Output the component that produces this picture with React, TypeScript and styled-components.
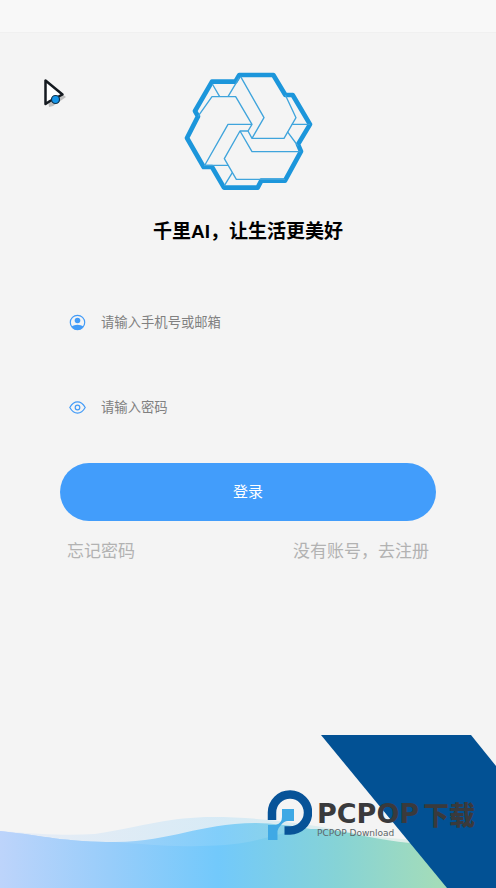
import React from "react";
import styled, { createGlobalStyle } from "styled-components";

const GlobalStyle = createGlobalStyle`
  * { box-sizing: border-box; }
  body {
    margin: 0;
    background: #f4f4f4;
    font-family: "Liberation Sans", "Noto Sans CJK SC", sans-serif;
  }
`;

const Page = styled.div`
  position: relative;
  min-height: 100vh;
  display: flex;
  flex-direction: column;
  overflow: hidden;
`;

const TopBar = styled.header`
  height: 33px;
  background: #f8f8f8;
  border-bottom: 1px solid #f0f0f0;
`;

const Main = styled.main`
  flex: 1;
  display: flex;
  flex-direction: column;
  align-items: center;
  padding: 29px 60px 0;
`;

const Logo = styled.svg`
  width: 144px;
  height: 136px;
`;

const Title = styled.h1`
  margin: 20px 0 0;
  font-size: 19px;
  line-height: 28px;
  font-weight: 700;
  color: #000;
`;

const Form = styled.form`
  width: 100%;
  margin-top: 46px;
`;

const Field = styled.label`
  display: flex;
  align-items: center;
  gap: 15px;
  height: 60px;
  margin-bottom: 25px;
  padding: 0 9px;
`;

const FieldIcon = styled.svg`
  flex: none;
  width: 17px;
  height: 17px;
  color: #429bf7;
`;

const Input = styled.input`
  flex: 1;
  min-width: 0;
  height: 24px;
  padding: 0 0 2px;
  border: 0;
  outline: 0;
  background: transparent;
  font-family: "Noto Sans CJK SC", sans-serif;
  color: #333;

  &::placeholder { color: #808080; }
`;

const SubmitButton = styled.button`
  display: block;
  width: 100%;
  height: 58px;
  margin-top: 26px;
  padding: 0 0 4px;
  border: 0;
  border-radius: 29px;
  background: #429dfb;
  color: #fff;
  font-family: "Noto Sans CJK SC", sans-serif;
  font-size: 15px;
  cursor: pointer;
`;

const Links = styled.nav`
  width: 100%;
  display: flex;
  justify-content: space-between;
  padding: 15px 7px 0;
`;

const TextLink = styled.a`
  font-family: "Noto Sans CJK SC", sans-serif;
  font-size: 17px;
  line-height: 28px;
  color: #b2b2b2;
  text-decoration: none;
`;

const Waves = styled.svg`
  position: absolute;
  left: 0;
  bottom: 0;
  width: 100%;
  height: 72px;
`;

const Banner = styled.svg`
  position: absolute;
  right: 0;
  bottom: 0;
  width: 176px;
  height: 153px;
`;

const Watermark = styled.div`
  position: absolute;
  right: 21px;
  bottom: 47px;
  display: flex;
  align-items: flex-start;
  gap: 5px;
`;

const WatermarkLogo = styled.svg`
  width: 45px;
  height: 51px;
`;

const WatermarkText = styled.div`
  display: flex;
  flex-direction: column;
  width: 158px;
  padding-top: 11px;
  color: #3a3a3c;
`;

const BrandName = styled.div`
  display: flex;
  justify-content: space-between;
  font-family: "DejaVu Sans", sans-serif;
  font-size: 27px;
  font-weight: 700;
  line-height: 26px;
`;

const BrandSuffix = styled.span`
  font-family: "Noto Sans CJK SC", sans-serif;
  font-size: 26px;
  font-weight: 900;
  line-height: 26px;
`;

const BrandCaption = styled.div`
  margin-top: 1px;
  font-family: "DejaVu Sans", sans-serif;
  font-size: 9px;
  line-height: 10px;
  color: #5d6668;
`;

const Cursor = styled.svg`
  position: absolute;
  left: 40px;
  top: 76px;
  width: 28px;
  height: 32px;
`;

function KnotLogo() {
  return (
    <Logo viewBox="0 0 432 408" role="img" aria-label="千里AI" fill="none" stroke="#1c96db" strokeLinejoin="round">
      <path
        strokeWidth="14"
        d="M190 39H292L328 99H350L402 187L366 247L375 268L327 356H256L245 377H144L108 315H83L33 228L66 163L57 147L108 59H178Z"
      />
      <g stroke="#3fa4dc" strokeWidth="4">
        <path d="M194 44L264 167L228 229L216 207" />
        <path d="M328 99L360 167L324 229H228" />
        <path d="M190 47L156 104M109 66L131 104" />
        <path d="M66 163L108 104H179L228 187L216 207H192L145 290L181 352H327" />
        <path d="M228 187H156L85 312M85 310H156" />
        <path d="M192 207L228 269H373" />
        <path d="M347 187H402M334 209L366 252M169 332L145 371" />
      </g>
    </Logo>
  );
}

function UserIcon() {
  return (
    <FieldIcon viewBox="0 0 17 17" aria-hidden="true">
      <circle cx="8.5" cy="8.5" r="7.2" fill="none" stroke="currentColor" strokeWidth="1.2" />
      <circle cx="8.5" cy="6.5" r="2.8" fill="currentColor" />
      <path d="M2.7 12.2Q5 10.7 8.5 10.7T14.3 12.2Q12.3 15.7 8.5 15.7T2.7 12.2Z" fill="currentColor" />
    </FieldIcon>
  );
}

function EyeIcon() {
  return (
    <FieldIcon viewBox="0 0 17 17" aria-hidden="true" fill="none" stroke="currentColor" strokeWidth="1.2">
      <path d="M.8 8.5Q4 2.9 8.5 2.9T16.2 8.5Q13 14.1 8.5 14.1T.8 8.5Z" />
      <circle cx="8.5" cy="8.5" r="2.3" />
    </FieldIcon>
  );
}

export default function App() {
  return (
    <Page>
      <GlobalStyle />
      <TopBar />
      <Main>
        <KnotLogo />
        <Title>千里AI，让生活更美好</Title>
        <Form onSubmit={(event) => event.preventDefault()}>
          <Field>
            <UserIcon />
            <Input type="text" name="account" aria-label="手机号或邮箱" placeholder="请输入手机号或邮箱" />
          </Field>
          <Field>
            <EyeIcon />
            <Input type="password" name="password" aria-label="密码" placeholder="请输入密码" />
          </Field>
          <SubmitButton type="submit">登录</SubmitButton>
        </Form>
        <Links>
          <TextLink href="#forgot">忘记密码</TextLink>
          <TextLink href="#register">没有账号，去注册</TextLink>
        </Links>
      </Main>

      <Waves viewBox="0 0 496 72" preserveAspectRatio="none" aria-hidden="true">
        <defs>
          <linearGradient id="sea" gradientUnits="userSpaceOnUse" x1="0" y1="0" x2="496" y2="0">
            <stop offset="0" stopColor="#bdd4fb" />
            <stop offset=".22" stopColor="#98cdfa" />
            <stop offset=".44" stopColor="#72c9fb" />
            <stop offset=".68" stopColor="#86d3d6" />
            <stop offset=".88" stopColor="#a3dcba" />
            <stop offset="1" stopColor="#a8ddb5" />
          </linearGradient>
        </defs>
        <path fill="url(#sea)" opacity=".22" d="M0 15C40 18 65 20 95 18C145 10 170 1 213 1C265 1 320 10 355 17C390 24 430 26 496 22V72H0Z" />
        <path fill="url(#sea)" opacity=".85" d="M0 15C45 20 65 26 115 26C175 25 195 8 256 7C290 8 310 13 330 17L410 28H496V72H0Z" />
        <path fill="url(#sea)" d="M0 15C45 20 65 26 115 26C145 28 165 31 200 30C265 30 275 13 318 13C345 14 380 25 410 27L496 30V72H0Z" />
      </Waves>
      <Banner viewBox="0 0 176 153" aria-hidden="true">
        <path fill="#025194" d="M1 0H151L176 31V153H127Z" />
      </Banner>
      <Watermark>
        <WatermarkLogo viewBox="0 0 45 51" aria-hidden="true">
          <path d="M5 30V22.5A18 18 0 1 1 22.5 40.5H17.5" fill="none" stroke="#075398" strokeWidth="8.5" />
          <path d="M15 19H27V31H21Q17 31 14 35Q11 38 10.5 41V50H1V35H9Q15 33 15 27Z" fill="#3fa9e5" />
        </WatermarkLogo>
        <WatermarkText>
          <BrandName>
            PCPOP<BrandSuffix>下载</BrandSuffix>
          </BrandName>
          <BrandCaption>PCPOP Download</BrandCaption>
        </WatermarkText>
      </Watermark>
      <Cursor viewBox="0 0 28 32" aria-hidden="true">
        <path d="M6 7L9 31L13 30L26 21Z" fill="#888" opacity=".5" />
        <path d="M5.5 4.5V28L10 25L22.5 18.5Z" fill="#fff" stroke="#151a20" strokeWidth="2.5" strokeLinejoin="round" />
        <circle cx="15.5" cy="23.5" r="4" fill="#1696ea" stroke="#12334c" strokeWidth="1.2" />
      </Cursor>
    </Page>
  );
}
